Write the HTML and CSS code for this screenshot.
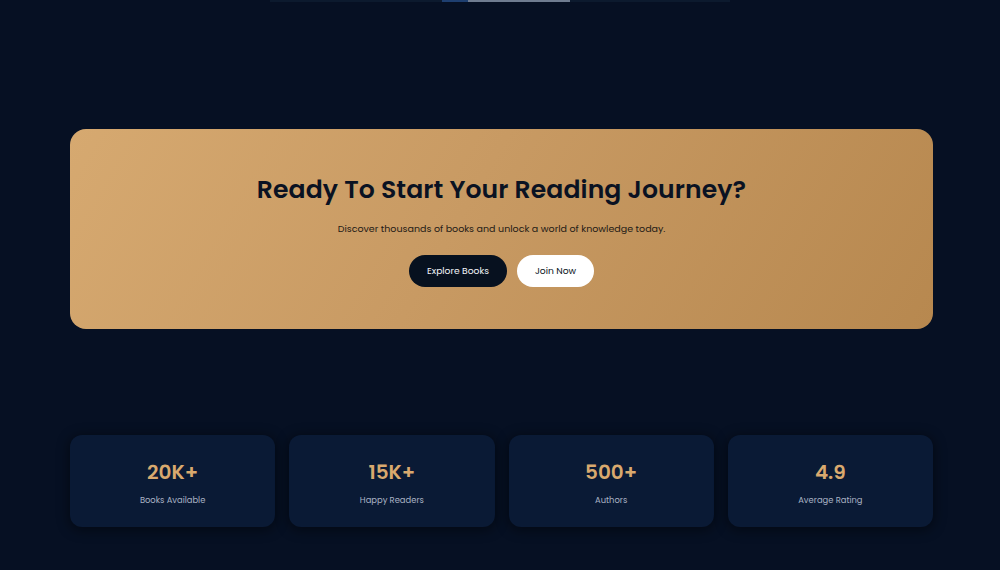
FILE: index.html
```html
<!DOCTYPE html>
<html lang="en">
<head>
<meta charset="utf-8">
<title>Reading Journey</title>
<link rel="stylesheet" href="styles.css">
</head>
<body>
<div class="top-strip">
  <div class="track">
    <div class="track-pad"></div>
    <div class="track-blue"></div>
    <div class="track-grey"></div>
  </div>
</div>
<main class="page">
  <section class="cta">
    <h2 class="cta-title">Ready To Start Your Reading Journey?</h2>
    <p class="cta-text">Discover thousands of books and unlock a world of knowledge today.</p>
    <div class="cta-actions">
      <a class="btn btn-dark" href="#">Explore Books</a>
      <a class="btn btn-light" href="#">Join Now</a>
    </div>
  </section>
  <section class="stats">
    <div class="stat"><div class="stat-num">20K+</div><div class="stat-label">Books Available</div></div>
    <div class="stat"><div class="stat-num">15K+</div><div class="stat-label">Happy Readers</div></div>
    <div class="stat"><div class="stat-num">500+</div><div class="stat-label">Authors</div></div>
    <div class="stat"><div class="stat-num">4.9</div><div class="stat-label">Average Rating</div></div>
  </section>
</main>
</body>
</html>
```

FILE: styles.css
```css
html, body {
  margin: 0;
  padding: 0;
}
body {
  background: #061023;
  font-family: Poppins, "Inter", "Noto Sans", sans-serif;
  width: 1000px;
  height: 570px;
  overflow: hidden;
}
.top-strip {
  height: 2px;
  display: flex;
  justify-content: flex-start;
  padding-left: 270px;
}
.track {
  width: 460px;
  height: 2px;
  display: flex;
  background: #0c1a2e;
}
.track-pad { width: 172px; }
.track-blue { width: 26px; background: #1e3f70; }
.track-grey { width: 102px; background: #6f7c90; }

.page {
  padding: 127px 0 0 70px;
  width: 863px;
}
.cta {
  height: 200px;
  box-sizing: border-box;
  border-radius: 16px;
  background: linear-gradient(120deg, #d6a970 0%, #c89a63 45%, #b7884f 100%);
  display: flex;
  flex-direction: column;
  align-items: center;
  padding-top: 43px;
}
.cta-title {
  margin: 0;
  font-size: 25.1px;
  font-weight: 600;
  color: #0a1222;
  line-height: 36px;
  letter-spacing: 0.1px;
}
.cta-text {
  margin: 14px 0 0;
  font-size: 9.5px;
  color: #1e1a16;
  line-height: 14px;
}
.cta-actions {
  margin-top: 19px;
  display: flex;
  gap: 10px;
}
.btn {
  height: 32px;
  box-sizing: border-box;
  display: flex;
  align-items: center;
  justify-content: center;
  border-radius: 16px;
  font-size: 9.2px;
  text-decoration: none;
}
.btn-dark {
  width: 98px;
  background: #07111f;
  color: #f2f4f8;
}
.btn-light {
  width: 77px;
  background: #ffffff;
  color: #0a1222;
}
.stats {
  margin-top: 106px;
  display: grid;
  grid-template-columns: repeat(4, 1fr);
  gap: 14px;
}
.stat {
  height: 92px;
  border-radius: 12px;
  background: #0a1a35;
  box-shadow: 0 2px 12px 2px rgba(0, 0, 0, 0.4);
  display: flex;
  flex-direction: column;
  align-items: center;
  padding-top: 24px;
  box-sizing: border-box;
}
.stat-num {
  font-size: 20px;
  font-weight: 600;
  color: #d9a96e;
  line-height: 26px;
}
.stat-label {
  margin-top: 9px;
  font-size: 8.4px;
  color: #a9b2c4;
  line-height: 12px;
}
```
